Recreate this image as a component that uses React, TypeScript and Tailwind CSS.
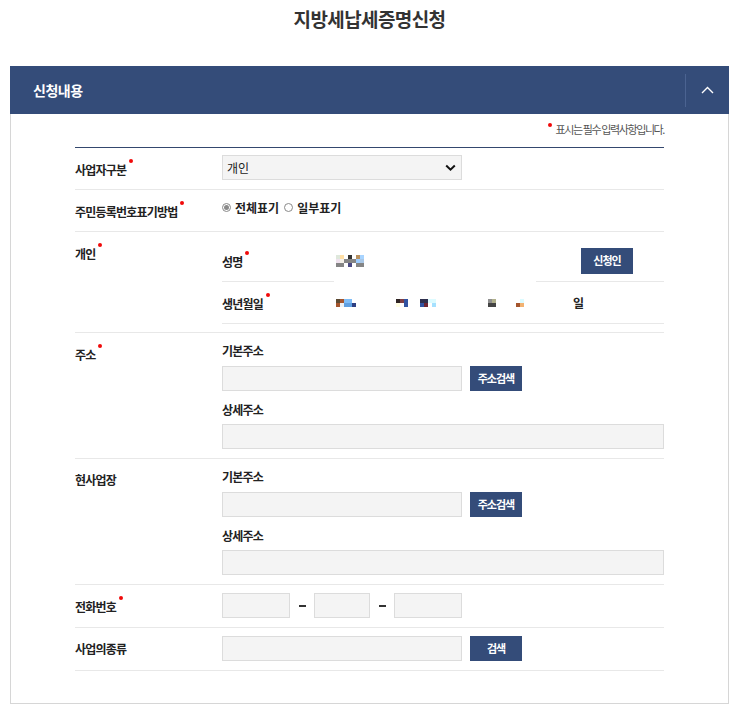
import React from 'react';

const FONT = "font-['Noto_Sans_CJK_KR','Noto_Sans',sans-serif]";

type Cells = string[][];

// 개인정보 가림 모자이크 (4px 블록)
const NAME_MOSAIC: Cells = [
  ['bg-[#dfe8dc]', 'bg-[#ffdfa6]', '', 'bg-[#343434]', '', 'bg-[#b8915f]', 'bg-[#a8d4ff]'],
  ['bg-[#efe2ee]', 'bg-[#f4f0e8]', 'bg-[#858585]', 'bg-[#858585]', 'bg-[#858585]', 'bg-[#9ccbff]', 'bg-[#a9c7e6]'],
  ['bg-[#858585]', 'bg-[#858585]', '', 'bg-[#4b4a84]', '', 'bg-[#858585]', 'bg-[#858585]'],
];

const BIRTH_MOSAICS: { gap: string; cells: Cells }[] = [
  {
    gap: 'ml-0',
    cells: [
      ['bg-[#5c4a33]', 'bg-[#a5552d]', 'bg-[#7fbdf7]', 'bg-[#7fbdf7]', ''],
      ['bg-[#a5552d]', 'bg-[#eef2f6]', 'bg-[#5fa0e2]', 'bg-[#5fa0e2]', 'bg-[#2f3f82]'],
    ],
  },
  {
    gap: 'ml-[40px]',
    cells: [
      ['bg-[#2f2424]', 'bg-[#7e3d45]', 'bg-[#3153a2]'],
      ['bg-[#fffde2]', '', 'bg-[#3153a2]'],
    ],
  },
  {
    gap: 'ml-[12px]',
    cells: [
      ['bg-[#2e2f4d]', 'bg-[#2e2f4d]', 'bg-[#ddfbff]', 'bg-[#ddfbff]'],
      ['bg-[#3153a2]', 'bg-[#6d2533]', '', 'bg-[#a6e1ff]'],
    ],
  },
  {
    gap: 'ml-[52px]',
    cells: [
      ['bg-[#8f8f8f]', 'bg-[#b0b08c]'],
      ['bg-[#444444]', 'bg-[#444444]'],
    ],
  },
  {
    gap: 'ml-[20px]',
    cells: [
      ['', 'bg-[#dcfbff]'],
      ['bg-[#a5552d]', 'bg-[#f2b272]'],
    ],
  },
];

function Mosaic({ cells, className = '' }: { cells: Cells; className?: string }) {
  return (
    <div className={`flex flex-col ${className}`}>
      {cells.map((row, r) => (
        <div key={r} className="flex">
          {row.map((c, i) => (
            <span key={i} className={`block h-[4px] w-[4px] ${c}`} />
          ))}
        </div>
      ))}
    </div>
  );
}

function Req({ children }: { children: React.ReactNode }) {
  return (
    <span className="relative inline-block leading-[17px]">
      {children}
      <span className="absolute -right-[7px] top-[-1px] h-[4px] w-[4px] rounded-full bg-[#f00a0a]" />
    </span>
  );
}

function Label({ text, required }: { text: string; required?: boolean }) {
  const t = <span className="text-[12px] font-bold leading-[17px] tracking-[-0.8px] text-[#222]">{text}</span>;
  return required ? <Req>{t}</Req> : t;
}

function Row({ label, required, children }: { label: string; required?: boolean; children: React.ReactNode }) {
  return (
    <div className="flex min-h-[42px] border-b border-[#e8e8e8]">
      <div className="flex w-[147px] shrink-0 items-start pt-[12px] leading-[17px]">
        <Label text={label} required={required} />
      </div>
      <div className="flex-1">{children}</div>
    </div>
  );
}

function Input({ className = '' }: { className?: string }) {
  return <div className={`h-[25px] border border-[#dcdcdc] bg-[#f4f4f4] ${className}`} />;
}

function Btn({ children, className = '' }: { children: React.ReactNode; className?: string }) {
  return (
    <button
      type="button"
      className={`flex h-[25px] w-[52px] items-center justify-center bg-[#344c79] text-[11px] font-bold tracking-[-1px] text-white ${className}`}
    >
      {children}
    </button>
  );
}

function SubLabel({ text }: { text: string }) {
  return <div className="text-[12px] font-bold leading-[17px] tracking-[-0.8px] text-[#222]">{text}</div>;
}

function AddressCell() {
  return (
    <div className="pb-[9px] pt-[9px]">
      <SubLabel text="기본주소" />
      <div className="mt-[7px] flex items-center gap-[8px]">
        <Input className="w-[240px]" />
        <Btn>주소검색</Btn>
      </div>
      <div className="mt-[10px]">
        <SubLabel text="상세주소" />
      </div>
      <Input className="mt-[6px] w-full" />
    </div>
  );
}

function Radio({ checked, label }: { checked?: boolean; label: string }) {
  return (
    <label className="flex items-center gap-[4px]">
      <span className="flex h-[9px] w-[9px] items-center justify-center rounded-full border border-[#8a8a8a] bg-white">
        {checked && <span className="h-[5px] w-[5px] rounded-full bg-[#8a8a8a]" />}
      </span>
      <span className="text-[12px] font-bold leading-[17px] tracking-[0px] text-[#222]">{label}</span>
    </label>
  );
}

function Dash() {
  return (
    <span className="flex w-[24px] justify-center">
      <span className="h-[2px] w-[7px] bg-[#333]" />
    </span>
  );
}

export default function App() {
  return (
    <div className={`min-h-[717px] bg-white ${FONT}`}>
      <div className="ml-[10px] w-[719px]">
        {/* Title */}
        <h1 className="pt-[6px] text-center text-[19px] font-bold leading-[26px] tracking-[-0.6px] text-[#333]">
          지방세납세증명신청
        </h1>

        {/* Panel header */}
        <div className="mt-[34px] flex h-[48px] items-center bg-[#344c79]">
          <h2 className="flex-1 pl-[23px] text-[14px] font-bold tracking-[-0.5px] text-white">신청내용</h2>
          <div className="h-[33px] w-px bg-[#4b6391]" />
          <button type="button" className="flex h-full w-[43px] items-center justify-center text-white">
            <svg width="13" height="8" viewBox="0 0 13 8" fill="none">
              <path d="M1 7l5.5-5.5L12 7" stroke="currentColor" strokeWidth="1.4" />
            </svg>
          </button>
        </div>

        {/* Panel body */}
        <div className="border-x border-b border-[#d6d6d6] px-[64px] pb-[32px]">
          <div className="flex justify-end pt-[7px]">
            <span className="relative pl-[8px] text-[11px] leading-[16px] tracking-[-1.4px] text-[#555]">
              <span className="absolute left-0 top-[2px] h-[4px] w-[4px] rounded-full bg-[#f00a0a]" />
              표시는 필수 입력사항입니다.
            </span>
          </div>

          <div className="mt-[10px] border-t border-[#34486e]">
            <Row label="사업자구분" required>
              <div className="py-[7px]">
                <div className="relative h-[25px] w-[240px] border border-[#dcdcdc] bg-[#f4f4f4]">
                  <span className="absolute left-[4px] top-[3px] text-[12px] leading-[17px] text-[#222]">개인</span>
                  <svg className="absolute right-[5px] top-[8px]" width="11" height="8" viewBox="0 0 11 8" fill="none">
                    <path d="M1.2 1.5l4.3 4.2 4.3-4.2" stroke="#111" strokeWidth="2" />
                  </svg>
                </div>
              </div>
            </Row>

            <Row label="주민등록번호표기방법" required>
              <div className="flex items-center gap-[5px] pt-[9px]">
                <Radio checked label="전체표기" />
                <Radio label="일부표기" />
              </div>
            </Row>

            <Row label="개인" required>
              <div className="py-[8px]">
                <div className="flex h-[42px]">
                  <div className="flex w-[112px] items-center border-b border-[#e8e8e8]">
                    <Label text="성명" required />
                  </div>
                  <div className="flex flex-1 items-center pl-[2px]">
                    <Mosaic cells={NAME_MOSAIC} className="-mt-[1px]" />
                  </div>
                  <div className="flex w-[128px] items-center justify-end border-b border-[#e8e8e8] pr-[31px]">
                    <Btn className="h-[26px]">신청인</Btn>
                  </div>
                </div>
                <div className="flex h-[42px] items-center border-b border-[#e8e8e8]">
                  <div className="flex w-[112px] items-center">
                    <Label text="생년월일" required />
                  </div>
                  <div className="flex items-center pl-[2px]">
                    {BIRTH_MOSAICS.map((m, i) => (
                      <Mosaic key={i} cells={m.cells} className={m.gap} />
                    ))}
                  </div>
                  <span className="ml-[49px] text-[12px] font-bold leading-[17px] text-[#222]">일</span>
                </div>
              </div>
            </Row>

            <Row label="주소" required>
              <AddressCell />
            </Row>

            <Row label="현사업장">
              <AddressCell />
            </Row>

            <Row label="전화번호" required>
              <div className="flex items-center pb-[9px] pt-[8px]">
                <Input className="w-[68px]" />
                <Dash />
                <Input className="w-[56px]" />
                <Dash />
                <Input className="w-[68px]" />
              </div>
            </Row>

            <Row label="사업의종류">
              <div className="flex items-center gap-[8px] pb-[9px] pt-[8px]">
                <Input className="w-[240px]" />
                <Btn>검색</Btn>
              </div>
            </Row>
          </div>
        </div>
      </div>
    </div>
  );
}
